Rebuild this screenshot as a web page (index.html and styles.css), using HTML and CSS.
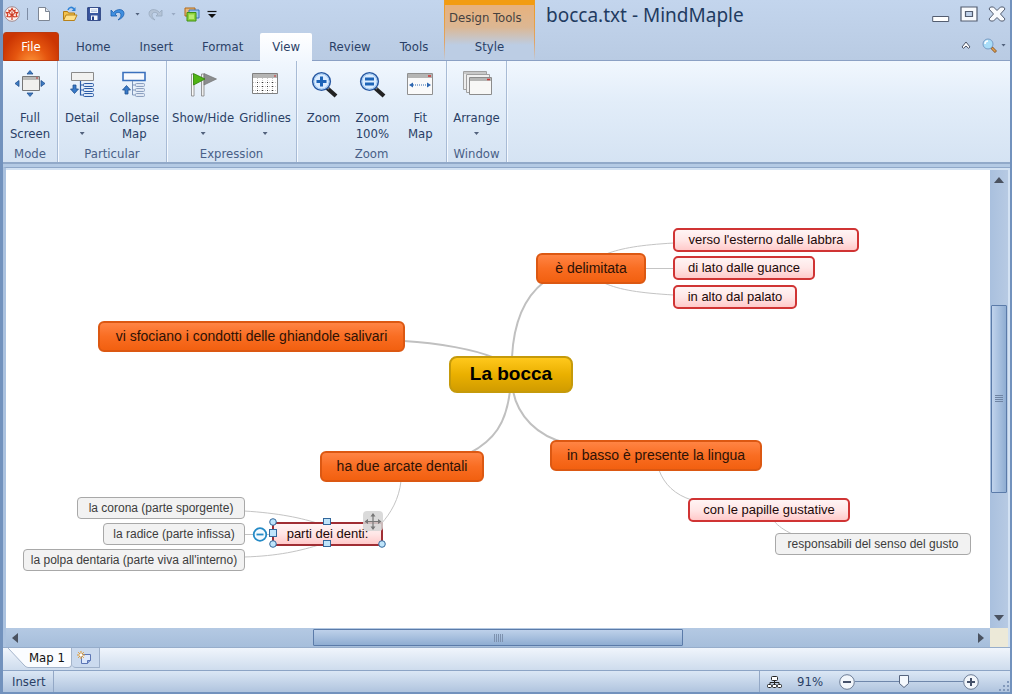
FILE: index.html
```html
<!DOCTYPE html>
<html lang="en">
<head>
<meta charset="utf-8">
<title>bocca.txt - MindMaple</title>
<link rel="stylesheet" href="styles.css">
</head>
<body>
<div class="window">
  <header class="header">
    <div class="header-left">
      <div class="quick">
        <svg class="logo" width="16" height="16" viewBox="0 0 16 16"><circle cx="8" cy="8" r="7.300" fill="#fbf1ee" stroke="#a08a90"/><path d="M8 14V9M8 2.500 6.500 5 5 4.200l.3 2.600L2.500 6.500l1.300 2.200L3 10.500l3 .3L8 9l2 1.800 3-.3-.8-1.800 1.300-2.200-2.800.3.300-2.600L9.500 5zM8 9V5.500M8 9 5.500 7.500M8 9l2.500-1.500" fill="none" stroke="#cf3a22" stroke-width="1.200"/></svg>
        <span class="quick-sep"></span>
        <button class="q q-new" aria-label="New"><svg width="14" height="16" viewBox="0 0 14 16"><path d="M1.500 1.500h7l4 4v9h-11z" fill="#fff" stroke="#7d8694"/><path d="M8.500 1.500v4h4" fill="#dfe5ee" stroke="#7d8694"/></svg></button>
        <button class="q q-open" aria-label="Open"><svg width="16" height="16" viewBox="0 0 16 16"><path d="M1.500 13.500v-8h4l1 1.500h6v6.500z" fill="#f3c14c" stroke="#b07a12"/><path d="M1.500 14.500 4 9h11l-2.500 5.500z" fill="#ffe08a" stroke="#b8821a"/><path d="M6 4c1-3 4-3.500 6-1" fill="none" stroke="#2f83d6" stroke-width="1.600"/><path d="M13.500 1v4h-4z" fill="#2f83d6"/></svg></button>
        <button class="q q-save" aria-label="Save"><svg width="14" height="14" viewBox="0 0 14 14"><path d="M.7.700h12.600v12.600H.7z" fill="#3a57a0" stroke="#22397a"/><path d="M3 1h8v5H3zM4 8.500h6.500V13H4z" fill="#f3f6fc"/><path d="M4 3h6M4 4.500h6" stroke="#9fb4da" stroke-width=".7"/><path d="M5 9.500h2V13H5z" fill="#26408a"/></svg></button>
        <button class="q q-undo" aria-label="Undo"><svg width="15" height="13" viewBox="0 0 15 13"><path d="M1 2v6h6L5 6c2-2.500 6-2 6 1 0 2-1.500 3.500-3 5 4-1.500 6-4 6-6.500C14 1 7.500 0 3.500 4.500z" fill="#3f8fe0" stroke="#1d5fae" stroke-width=".8"/></svg></button>
        <span class="caret"></span>
        <button class="q q-redo" aria-label="Redo"><svg width="15" height="13" viewBox="0 0 15 13"><path d="M14 2v6H8l2-2C8 3.500 4 4 4 7c0 2 1.500 3.500 3 5C3 10.500 1 8 1 5.500 1 1 7.500 0 11.500 4.500z" fill="#b4c3d6" stroke="#98a9bf" stroke-width=".8"/></svg></button>
        <span class="caret faint"></span>
        <button class="q q-win" aria-label="Windows"><svg width="16" height="15" viewBox="0 0 16 15"><path d="M1 1h10v8H1z" fill="#e8b878" stroke="#b06818"/><path d="M5 3h10v8H5z" fill="#9cc6f0" stroke="#3c74b8"/><path d="M3 5.500h9V14H3z" fill="#8ad03a" stroke="#3f9114"/><path d="M5 7.500h5V12H5z" fill="#b8ea70"/></svg></button>
        <button class="q q-more" aria-label="Customize"><svg width="10" height="8" viewBox="0 0 10 8"><path d="M.5 1.500h9" stroke="#111" stroke-width="1.200"/><path d="M1 4h8L5 8z" fill="#111"/></svg></button>
      </div>
      <nav class="tabs">
        <a class="tab-file" href="#file">File</a>
        <a class="tab" href="#home">Home</a>
        <a class="tab" href="#insert">Insert</a>
        <a class="tab" href="#format">Format</a>
        <a class="tab active" href="#view">View</a>
        <a class="tab" href="#review">Review</a>
        <a class="tab" href="#tools">Tools</a>
      </nav>
    </div>
    <div class="context">
      <span class="context-title">Design Tools</span>
      <a class="context-tab" href="#style">Style</a>
    </div>
    <div class="header-right">
      <div class="title-row">
        <h1 class="title">bocca.txt - MindMaple</h1>
        <div class="win-buttons">
          <button class="wb" aria-label="Minimize"><svg width="18" height="16" viewBox="0 0 18 16"><path d="M.7 10.500h16v5h-16z" fill="#fff" stroke="#535d70"/></svg></button>
          <button class="wb" aria-label="Maximize"><svg width="18" height="16" viewBox="0 0 18 16"><path d="M1 1h16v14H1zM5.500 5.500v5h7v-5z" fill="#f8fafd" fill-rule="evenodd" stroke="#535d70" stroke-width="1.200"/></svg></button>
          <button class="wb" aria-label="Close"><svg width="18" height="16" viewBox="0 0 18 16"><path d="M2.500 1h3L9 4.500 12.500 1h3l1.500 2-4.500 5 4.500 5-1.500 2h-3L9 11.500 5.500 15h-3L1 13l4.500-5L1 3z" fill="#f8fafd" stroke="#535d70"/></svg></button>
        </div>
      </div>
      <div class="util-row">
        <button class="wb" aria-label="Collapse ribbon"><svg width="10" height="8" viewBox="0 0 10 8"><path d="M1 6 5 1l4 5-1.500 1.300L5 5 2.500 7.300z" fill="#fff" stroke="#4a5468"/></svg></button>
        <button class="wb find" aria-label="Find"><svg width="15" height="15" viewBox="0 0 15 15"><path d="m9 9 5 5" stroke="#8a5a2c" stroke-width="3"/><path d="m10 10 3.500 3.500" stroke="#e2a24e" stroke-width="1.500"/><circle cx="6" cy="6" r="5" fill="#a9ddf8" stroke="#7a9cc4"/><path d="M3 6c0-2 1-3 3-3" stroke="#fff" stroke-width="1.500" fill="none"/></svg></button>
        <span class="caret"></span>
      </div>
    </div>
  </header>

  <section class="ribbon">
    <div class="group g-mode">
      <div class="tools">
        <button class="tool"><svg width="32" height="32" viewBox="0 0 32 32"><path d="M8.500 8.500h17v14h-17z" fill="#f0f0ee" stroke="#777"/><path d="M9 9h16v3H9z" fill="#b9b9b7"/><path d="M22 10h2" stroke="#b33"/><path d="M16 2.500 19 6h-6zM16 28.500l3-3.500h-6zM1 15.500l4-3v6zM31 15.500l-4-3v6z" fill="#3d7cc4" stroke="#23518e" stroke-width=".8"/></svg><span>Full<br>Screen</span></button>
      </div>
      <div class="group-name">Mode</div>
    </div>
    <div class="group g-particular">
      <div class="tools">
        <button class="tool"><svg width="32" height="32" viewBox="0 0 32 32"><path d="M5.500 4.500h22v8h-22z" fill="#f1f1f0" stroke="#8a8a8a"/><path d="M14.500 13v14h3M14.500 17h3M14.500 22h3" fill="none" stroke="#2c5ca6" stroke-width="1.200"/><g fill="#dce8f8" stroke="#2c5ca6"><rect x="17.500" y="15.500" width="10" height="3" rx="1"/><rect x="17.500" y="20.500" width="10" height="3" rx="1"/><rect x="17.500" y="25.500" width="10" height="3" rx="1"/></g><path d="M7 17h3v4h2.500l-4 4.500-4-4.500H7z" fill="#3779c8" stroke="#20508f" stroke-width=".8"/></svg><span>Detail</span><i class="caret"></i></button>
        <button class="tool"><svg width="32" height="32" viewBox="0 0 32 32"><path d="M5 4.500h22v8H5z" fill="#f7f9fd" stroke="#3a70bd" stroke-width="1.600"/><path d="M14.500 13v14h3M14.500 17h3M14.500 22h3" fill="none" stroke="#7d94b8"/><g fill="#dfe7f3" stroke="#8ca0c0"><rect x="17.500" y="15.500" width="9" height="3" rx="1"/><rect x="17.500" y="20.500" width="9" height="3" rx="1"/><rect x="17.500" y="25.500" width="9" height="3" rx="1"/></g><path d="M7 26h3v-4h2.500l-4-4.500-4 4.500H7z" fill="#3779c8" stroke="#20508f" stroke-width=".8"/></svg><span>Collapse<br>Map</span></button>
      </div>
      <div class="group-name">Particular</div>
    </div>
    <div class="group g-expression">
      <div class="tools">
        <button class="tool"><svg width="32" height="32" viewBox="0 0 32 32"><path d="M14.500 6h2.500v22h-2.500z" fill="#eee" stroke="#808080" stroke-width=".8"/><path d="M17 5.500 29.500 11 17 17z" fill="#8b8d8e" stroke="#6c6c6c" stroke-width=".6"/><path d="M4.500 6H7v22H4.500z" fill="#fafafa" stroke="#808080" stroke-width=".8"/><path d="M6.500 5.500 18 11 6.500 17z" fill="#4fb415" stroke="#2f8007" stroke-width=".8"/></svg><span>Show/Hide</span><i class="caret"></i></button>
        <button class="tool"><svg width="32" height="32" viewBox="0 0 32 32"><path d="M3.500 5.500h25v20h-25z" fill="#fff" stroke="#808080"/><path d="M4 6h24v4H4z" fill="#b5b5b4"/><path d="M25 8h2" stroke="#c33"/><path d="M4 14.500h24M4 18.500h24M4 22.500h24M8.500 10v15M13.500 10v15M18.500 10v15M23.500 10v15" stroke="#c8c8c8" stroke-dasharray="1 1"/><path d="M8 14.500h16M8 18.500h16M8 22.500h16" stroke="#333" stroke-width="1.200" stroke-dasharray="1 4"/></svg><span>Gridlines</span><i class="caret"></i></button>
      </div>
      <div class="group-name">Expression</div>
    </div>
    <div class="group g-zoom">
      <div class="tools">
        <button class="tool"><svg width="32" height="32" viewBox="0 0 32 32"><path d="m19 20 9 8" stroke="#222" stroke-width="4.200"/><path d="m18 18 3 3" stroke="#777" stroke-width="2"/><circle cx="13.500" cy="13.500" r="8.800" fill="#dcecff" stroke="#2858a2" stroke-width="1.600"/><circle cx="13.500" cy="13.500" r="7.500" fill="none" stroke="#9cc8f2"/><path d="M12 8.500h3V12h3.500v3H15v3.500h-3V15H8.500v-3H12z" fill="#1d64b8"/></svg><span>Zoom</span></button>
        <button class="tool"><svg width="32" height="32" viewBox="0 0 32 32"><path d="m19 20 9 8" stroke="#222" stroke-width="4.200"/><path d="m18 18 3 3" stroke="#777" stroke-width="2"/><circle cx="13.500" cy="13.500" r="8.800" fill="#dcecff" stroke="#2858a2" stroke-width="1.600"/><circle cx="13.500" cy="13.500" r="7.500" fill="none" stroke="#9cc8f2"/><path d="M9 9.500h9v3H9zM9 14.500h9v3H9z" fill="#1d64b8"/></svg><span>Zoom<br>100%</span></button>
        <button class="tool"><svg width="32" height="32" viewBox="0 0 32 32"><path d="M3.500 5.500h25v21h-25z" fill="#fafafa" stroke="#909090"/><path d="M4 6h24v4H4z" fill="#b5b5b4"/><path d="M24 8h3" stroke="#c33" stroke-width="1.500"/><path d="M9 17h14" stroke="#2c66b0" stroke-dasharray="1 1"/><path d="m5 17 4-2.500v5zM27 17l-4-2.500v5z" fill="#2c66b0"/></svg><span>Fit<br>Map</span></button>
      </div>
      <div class="group-name">Zoom</div>
    </div>
    <div class="group g-window">
      <div class="tools">
        <button class="tool"><svg width="32" height="32" viewBox="0 0 32 32"><path d="M2.500 3.500h23v18h-23z" fill="#ececec" stroke="#a0a0a0"/><path d="M3 4h22v2H3z" fill="#c8c8c8"/><path d="M5.500 6.500h23v18h-23z" fill="#f0f0f0" stroke="#a0a0a0"/><path d="M8.500 9.500h22v17h-22z" fill="#f7f7f6" stroke="#8c8c8c"/><path d="M9 10h21v3H9z" fill="#b5b5b4"/><path d="M26 11.500h3" stroke="#c33" stroke-width="1.500"/></svg><span>Arrange</span><i class="caret"></i></button>
      </div>
      <div class="group-name">Window</div>
    </div>
  </section>

  <main class="workspace">
    <div class="canvas">
      <svg class="links" width="984" height="458" viewBox="6 170 984 458">
        <g fill="none" stroke="#c0c0c0" stroke-width="2">
          <path d="M512 357C514 318 526 296 544 282"/><path d="M404 341C440 343 475 350 492 357"/><path d="M510 391C506 424 494 440 470 453"/><path d="M513 391C518 416 537 436 566 443"/>
        </g>
        <g fill="none" stroke="#c4c4c4">
          <path d="M606 254C622 248 640 245 674 243M645 268.500h29M604 283C620 290 640 293 674 295M401 481C399 499 391 513 381 524M659 470C664 484 675 495 692 500M774 521C778 526 784 530 792 534M244 511C278 513 302 518 320 524M244 534.500h30M244 557C278 556 300 551 322 544"/>
        </g>
      </svg>
      <div class="node root">La bocca</div>
      <div class="node main n-delimitata">è delimitata</div>
      <div class="node main n-condotti">vi sfociano i condotti delle ghiandole salivari</div>
      <div class="node main n-arcate">ha due arcate dentali</div>
      <div class="node main n-lingua">in basso è presente la lingua</div>
      <div class="node sub n-labbra">verso l'esterno dalle labbra</div>
      <div class="node sub n-guance">di lato dalle guance</div>
      <div class="node sub n-palato">in alto dal palato</div>
      <div class="node sub n-papille">con le papille gustative</div>
      <div class="node leaf n-gusto">responsabili del senso del gusto</div>
      <div class="node leaf n-corona">la corona (parte sporgente)</div>
      <div class="node leaf n-radice">la radice (parte infissa)</div>
      <div class="node leaf n-polpa">la polpa dentaria (parte viva all'interno)</div>
      <div class="node sub selected n-denti">parti dei denti:</div>
      <svg class="handles" width="136" height="40" viewBox="250 509 136 40">
        <rect x="363" y="511" width="20" height="20" rx="4" fill="#d4d4d4" fill-opacity=".85"/>
        <path d="M373 514v15M365.500 521.500h15" stroke="#777" stroke-width="1.200"/>
        <path d="m373 513 2.500 3.500h-5zM373 530l2.500-3.500h-5zM364.500 521.500l3.500-2.500v5zM381.500 521.500 378 519v5z" fill="#777"/>
        <circle cx="260" cy="534.500" r="6.300" fill="#f3faff" stroke="#248ac6" stroke-width="1.800"/><path d="M256.500 534.500h7" stroke="#248ac6" stroke-width="1.800"/>
        <g fill="#bfe4fa" stroke="#33689c"><circle cx="273" cy="522" r="3.300"/><circle cx="273" cy="544" r="3.300"/><circle cx="382" cy="544" r="3.300"/><rect x="323.500" y="518.500" width="7" height="6"/><rect x="323.500" y="540.500" width="7" height="6"/><rect x="269.500" y="529.500" width="7" height="7"/></g>
      </svg>
    </div>
    <div class="vscroll">
      <button class="sb" aria-label="Scroll up"><svg width="10" height="6" viewBox="0 0 10 6"><path d="m5 0 5 6H0z" fill="#4a5260"/></svg></button>
      <span class="track-end"></span>
      <span class="vthumb"><svg width="8" height="8" viewBox="0 0 8 8"><path d="M0 .5h8M0 2.500h8M0 4.500h8M0 6.500h8" stroke="#6f84a3"/></svg></span>
      <span class="track-end"></span>
      <button class="sb" aria-label="Scroll down"><svg width="10" height="6" viewBox="0 0 10 6"><path d="M0 0h10L5 6z" fill="#4a5260"/></svg></button>
    </div>
    <div class="hscroll">
      <button class="sb" aria-label="Scroll left"><svg width="6" height="10" viewBox="0 0 6 10"><path d="M6 0v10L0 5z" fill="#4a5260"/></svg></button>
      <span class="htrack-end"></span>
      <span class="hthumb"><svg width="9" height="8" viewBox="0 0 9 8"><path d="M.5 0v8M2.500 0v8M4.500 0v8M6.500 0v8M8.500 0v8" stroke="#7d91ae"/></svg></span>
      <span class="htrack-end"></span>
      <button class="sb" aria-label="Scroll right"><svg width="6" height="10" viewBox="0 0 6 10"><path d="m0 0 6 5-6 5z" fill="#4a5260"/></svg></button>
    </div>
    <div class="corner"></div>
  </main>

  <nav class="sheets">
    <a class="sheet" href="#map1"><svg class="sheet-edge" width="20" height="20" viewBox="0 0 20 20"><path d="M0 0 16 17q2 2.500 4 2.500V0z" fill="#fafcff"/><path d="M0 0 16 17q2 2.500 4 2.500" fill="none" stroke="#a4b4ca"/></svg><span class="sheet-name">Map 1</span></a>
    <button class="new-sheet" aria-label="New map"><svg width="16" height="14" viewBox="0 0 16 14"><path d="M4.500 3.500h9v6l-3 3h-6z" fill="#dde8fb" stroke="#5d76b4"/><path d="m13.500 9.500-3 0v3" fill="#8da6dc" stroke="#5d76b4"/><path d="M4 0v8M0 4h8M1.200 1.200l5.600 5.600M6.800 1.200 1.200 6.800" stroke="#e39a2c"/><circle cx="4" cy="4" r="1.500" fill="#fff"/></svg></button>
  </nav>

  <footer class="status">
    <span class="mode">Insert</span>
    <div class="status-right">
      <svg class="tree" width="15" height="14" viewBox="0 0 15 14"><g fill="#fff" stroke="#222"><path d="M7.500 6v3M3 9V7.500h9V9" fill="none"/><rect x="4.500" y="1.500" width="6" height="4" rx="1"/><rect x=".5" y="9.500" width="4" height="3" rx="1"/><rect x="5.500" y="9.500" width="4" height="3" rx="1"/><rect x="10.500" y="9.500" width="4" height="3" rx="1"/></g></svg>
      <label class="percent" for="zoom">91%</label>
      <button class="zb" aria-label="Zoom out"><svg width="16" height="16" viewBox="0 0 16 16"><circle cx="8" cy="8" r="7.300" fill="#f2f6fb" stroke="#6d7d96"/><path d="M4 8h8" stroke="#45516a" stroke-width="2"/></svg></button>
      <input class="slider" id="zoom" type="range" min="0" max="100" value="45">
      <button class="zb" aria-label="Zoom in"><svg width="16" height="16" viewBox="0 0 16 16"><circle cx="8" cy="8" r="7.300" fill="#f2f6fb" stroke="#6d7d96"/><path d="M4 8h8M8 4v8" stroke="#45516a" stroke-width="2"/></svg></button>
      <svg class="grip" width="12" height="12" viewBox="0 0 12 12"><path d="M9 1h2v2H9zM5 5h2v2H5zM9 5h2v2H9zM1 9h2v2H1zM5 9h2v2H5zM9 9h2v2H9z" fill="#8299bb"/></svg>
    </div>
  </footer>
</div>
</body>
</html>
```
FILE: styles.css
```css
* { box-sizing: border-box; }
body {
  margin: 0;
  font-family: "DejaVu Sans Condensed", "DejaVu Sans", sans-serif;
  font-size: 13px;
  line-height: 16px;
  color: #2a3f66;
}
button {
  padding: 0;
  border: 0;
  background: none;
  font: inherit;
  color: inherit;
}
a { color: inherit; text-decoration: none; }
svg { display: block; flex: none; }

.window {
  display: flex;
  flex-direction: column;
  height: 100vh;
  min-height: 480px;
  border: solid #7292bd;
  border-width: 0 2px 2px 3px;
  background: #b4cae4;
}

/* title bar and tabs */
.header {
  display: flex;
  flex: none;
  height: 61px;
  background: linear-gradient(#c3d5ed, #b9cbe3);
  border-bottom: 1px solid #8ba0c4;
}
.header-left {
  display: flex;
  flex-direction: column;
  justify-content: space-between;
  flex: none;
  width: 441px;
}
.quick { display: flex; align-items: center; height: 28px; padding-left: 1px; }
.quick-sep { width: 1px; height: 12px; margin: 0 9px 0 7px; background: #7d8ca4; }
.q-new { margin-right: 11px; }
.q-open { margin-right: 9px; }
.q-save { margin-right: 9px; }
.q-undo { margin-right: 10px; }
.q-redo { margin: 0 8px; }
.q-win { margin: 0 7px 0 8px; }
.caret {
  display: block;
  width: 5px;
  height: 3px;
  background: #52627d;
  clip-path: polygon(0 0, 100% 0, 50% 100%);
}
.caret.faint { background: #9aabc4; }
.tabs { display: flex; align-items: flex-end; gap: 5px; margin-bottom: -1px; }
.tab-file {
  width: 56px;
  height: 29px;
  border: 1px solid #b93a10;
  border-radius: 3px 3px 0 0;
  background: radial-gradient(ellipse at 50% 120%, #ff9a3c 0, #e5550f 45%, #cb3503 80%);
  color: #fff;
  line-height: 27px;
  text-align: center;
}
.tab { height: 28px; padding: 0 12px; line-height: 28px; }
.tab.active { background: linear-gradient(#fff, #f1f7fe); border-radius: 2px 2px 0 0; }
.context {
  display: flex;
  flex-direction: column;
  justify-content: space-between;
  flex: none;
  width: 91px;
  border: solid #dca56a;
  border-width: 0 1px;
  border-image: linear-gradient(#f09a1a, #e0a467 70%, #bccde5) 1;
  background: linear-gradient(#f29c12 0 5px, #e7b17c 5px, #dcb793 45%, #bccde4 75%);
  white-space: nowrap;
}
.context-title { padding: 10px 0 0 4px; color: #46413f; }
.context-tab { line-height: 26px; text-align: center; }
.header-right { flex: 1; display: flex; flex-direction: column; min-width: 0; }
.title-row { display: flex; justify-content: space-between; height: 32px; padding: 0 4px 0 11px; }
.title {
  margin: 0;
  font-family: "Noto Sans", sans-serif;
  font-size: 19px;
  font-weight: 400;
  line-height: 30px;
  white-space: nowrap;
  color: #1f3b61;
}
.win-buttons { display: flex; align-items: center; gap: 10px; height: 28px; }
.util-row { display: flex; align-items: center; justify-content: flex-end; height: 26px; padding-right: 4px; }
.find { margin: 0 4px 0 11px; }

/* ribbon */
.ribbon {
  display: flex;
  flex: none;
  height: 103px;
  background: linear-gradient(#f1f7fe, #e2edf9 40%, #d5e3f3);
  border-bottom: 2px solid #91a9c9;
}
.group {
  display: flex;
  flex-direction: column;
  justify-content: space-between;
  border-right: 1px solid #a8bbd5;
  box-shadow: 1px 0 #f4f9ff;
  text-align: center;
  white-space: nowrap;
}
.g-mode { width: 55px; }
.g-particular { width: 109px; }
.g-expression { width: 130px; }
.g-zoom { width: 150px; }
.g-window { width: 60px; }
.tools { display: flex; justify-content: center; padding-top: 7px; }
.tool { display: flex; flex-direction: column; align-items: center; flex: none; line-height: 16px; }
.tool span { padding-top: 10px; }
.tool .caret { margin-top: 6px; }
.g-particular .tools { gap: 10px; }
.g-expression .tools { gap: 5px; }
.g-zoom .tools { gap: 15px; }
.group-name { line-height: 17px; color: #495f87; }

/* map and scroll bars */
.workspace {
  display: grid;
  grid-template: 1fr 19px / 1fr 18px;
  flex: 1;
  min-height: 0;
  margin-top: 3px;
  padding-top: 2px;
  padding-right: 2px;
  border-top: 1px solid #8fa8c9;
  border-left: 3px solid #abc2df;
  background: #d3e2f3;
}
.canvas { position: relative; overflow: hidden; background: #fff; }
.links { position: absolute; left: 0; top: 0; }
.vscroll { display: flex; flex-direction: column; padding: 1px; background: linear-gradient(90deg, #a9c0de, #b7cae3); }
.hscroll { display: flex; padding: 1px 0; background: linear-gradient(#b4c9e3, #a6bedb); }
.corner { background: #ece9d8; }
.sb { display: flex; flex: none; align-items: center; justify-content: center; width: 18px; height: 18px; }
.vscroll .sb { width: 16px; }
.track-end { flex: 117; }
.htrack-end { flex: 290; }
.vthumb, .hthumb { display: flex; align-items: center; justify-content: center; border: 1px solid #5b7ba9; border-radius: 1px; }
.vthumb { flex: 188; background: linear-gradient(90deg, #c0d3ec, #8fadd2); }
.hthumb { flex: 368; background: linear-gradient(#bed1ea, #8fadd2); }

.node {
  position: absolute;
  display: flex;
  align-items: center;
  justify-content: center;
  padding-bottom: 1px;
  font-family: "Liberation Sans", Arial, sans-serif;
  white-space: nowrap;
}
.root {
  left: 443px; top: 186px; width: 124px; height: 37px;
  border: 2px solid #c59a0a;
  border-radius: 8px;
  background: linear-gradient(#ffc81c, #eab000 50%, #d19c00);
  color: #000;
  font-size: 19px;
  font-weight: 700;
}
.main {
  height: 31px;
  border: 2px solid #dc5812;
  border-radius: 6px;
  background: linear-gradient(#ff8444, #f96d22 50%, #f26010);
  color: #2e1206;
  font-size: 14px;
}
.sub {
  height: 24px;
  border: 2px solid #d03434;
  border-radius: 5px;
  background: linear-gradient(#fff4f4, #ffe6e6 50%, #ffcaca);
  color: #1c0808;
  font-size: 13px;
}
.leaf {
  height: 22px;
  border: 1px solid #a8a8a8;
  border-radius: 4px;
  background: #f2f2f2;
  color: #3c3c3c;
  font-size: 12px;
}
.selected { border-color: #a02e34; border-radius: 1px; }
.n-delimitata { left: 530px; top: 83px; width: 110px; }
.n-condotti { left: 92px; top: 151px; width: 307px; }
.n-arcate { left: 314px; top: 281px; width: 164px; }
.n-lingua { left: 544px; top: 270px; width: 212px; }
.n-labbra { left: 667px; top: 58px; width: 186px; }
.n-guance { left: 667px; top: 86px; width: 142px; }
.n-palato { left: 667px; top: 115px; width: 124px; }
.n-papille { left: 682px; top: 328px; width: 162px; }
.n-gusto { left: 769px; top: 363px; width: 196px; }
.n-corona { left: 71px; top: 327px; width: 168px; }
.n-radice { left: 97px; top: 353px; width: 142px; }
.n-polpa { left: 17px; top: 379px; width: 222px; }
.n-denti { left: 266px; top: 352px; width: 111px; }
.handles { position: absolute; left: 244px; top: 339px; }

/* sheet tabs */
.sheets {
  display: flex;
  flex: none;
  height: 23px;
  border-top: 1px solid #96adcb;
  background: linear-gradient(#f0f5fc, #cedced);
}
.sheet { display: flex; height: 20px; padding-left: 5px; color: #111; line-height: 20px; }
.sheet-name {
  padding: 0 6px 0 1px;
  border: solid #a4b4ca;
  border-width: 0 1px 1px 0;
  border-radius: 0 0 4px 0;
  background: #fafcff;
}
.new-sheet {
  display: flex;
  align-items: center;
  justify-content: center;
  width: 28px;
  height: 20px;
  border: solid #9fb1ca;
  border-width: 0 1px 1px 0;
  border-radius: 0 0 1px 4px;
  background: #cbdaee;
}

/* status bar */
.status {
  display: flex;
  justify-content: space-between;
  flex: none;
  height: 22px;
  border-top: 1px solid #8ca4c5;
  background: linear-gradient(#dbe7f5, #b0c4de);
}
.mode { padding: 0 7px 0 9px; border-right: 1px solid #93a8c6; line-height: 21px; }
.status-right { display: flex; align-items: center; padding-left: 7px; border-left: 1px solid #93a8c6; }
.percent { width: 57px; padding-left: 15px; }
.slider {
  appearance: none;
  width: 108px;
  height: 16px;
  margin: 0;
  background: linear-gradient(#6f87ab, #6f87ab) center / 100% 1px no-repeat;
}
.slider::-webkit-slider-thumb {
  appearance: none;
  width: 10px;
  height: 13px;
  background: url("data:image/svg+xml,%3Csvg xmlns='http://www.w3.org/2000/svg' width='10' height='13'%3E%3Cpath d='M.5.5h9v8l-4.500 4-4.500-4z' fill='%23f4f8fd' stroke='%2356657f'/%3E%3C/svg%3E");
}
.grip { align-self: flex-end; margin-left: 19px; }
```
